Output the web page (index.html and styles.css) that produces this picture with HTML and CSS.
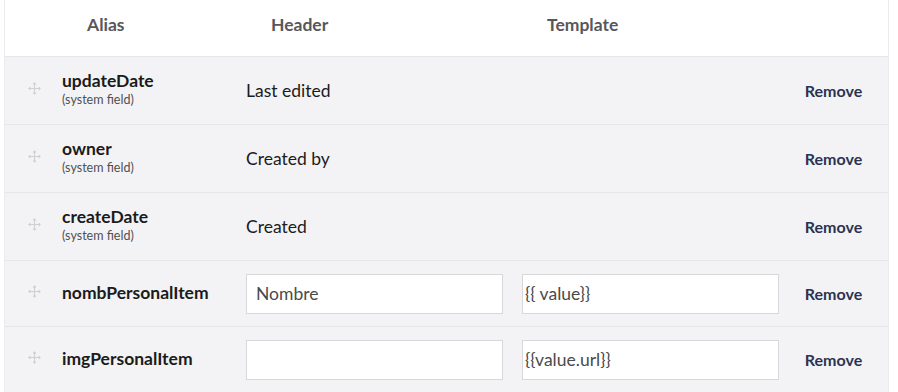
FILE: index.html
```html
<!DOCTYPE html>
<html lang="en">
<head>
  <meta charset="UTF-8" />
  <title>List view columns</title>
  <link rel="stylesheet" href="styles.css">
</head>
<body>

  <!-- Columns table -->
  <div class="columns">
    <div class="row head">
      <div></div>
      <div class="th">Alias</div>
      <div class="th">Header</div>
      <div></div>
      <div class="th">Template</div>
      <div></div>
    </div>

    <div class="row">
      <div class="drag"><svg viewBox="0 0 14 14"><path d="M7 1v12M1 7h12M5.5 2.5L7 1l1.5 1.5M5.5 11.5L7 13l1.5-1.5M2.5 5.5L1 7l1.5 1.5M11.5 5.5L13 7l-1.5 1.5"/></svg></div>
      <div class="alias"><b>updateDate</b><small>(system field)</small></div>
      <div class="val">Last edited</div>
      <div></div>
      <div></div>
      <div class="remove">Remove</div>
    </div>

    <div class="row">
      <div class="drag"><svg viewBox="0 0 14 14"><path d="M7 1v12M1 7h12M5.5 2.5L7 1l1.5 1.5M5.5 11.5L7 13l1.5-1.5M2.5 5.5L1 7l1.5 1.5M11.5 5.5L13 7l-1.5 1.5"/></svg></div>
      <div class="alias"><b>owner</b><small>(system field)</small></div>
      <div class="val">Created by</div>
      <div></div>
      <div></div>
      <div class="remove">Remove</div>
    </div>

    <div class="row">
      <div class="drag"><svg viewBox="0 0 14 14"><path d="M7 1v12M1 7h12M5.5 2.5L7 1l1.5 1.5M5.5 11.5L7 13l1.5-1.5M2.5 5.5L1 7l1.5 1.5M11.5 5.5L13 7l-1.5 1.5"/></svg></div>
      <div class="alias"><b>createDate</b><small>(system field)</small></div>
      <div class="val">Created</div>
      <div></div>
      <div></div>
      <div class="remove">Remove</div>
    </div>

    <div class="row edit">
      <div class="drag"><svg viewBox="0 0 14 14"><path d="M7 1v12M1 7h12M5.5 2.5L7 1l1.5 1.5M5.5 11.5L7 13l1.5-1.5M2.5 5.5L1 7l1.5 1.5M11.5 5.5L13 7l-1.5 1.5"/></svg></div>
      <div class="alias"><b>nombPersonalItem</b></div>
      <div><input type="text" class="field" value="Nombre"></div>
      <div></div>
      <div><input type="text" class="field tpl" value="{{ value}}"></div>
      <div class="remove">Remove</div>
    </div>

    <div class="row edit">
      <div class="drag"><svg viewBox="0 0 14 14"><path d="M7 1v12M1 7h12M5.5 2.5L7 1l1.5 1.5M5.5 11.5L7 13l1.5-1.5M2.5 5.5L1 7l1.5 1.5M11.5 5.5L13 7l-1.5 1.5"/></svg></div>
      <div class="alias"><b>imgPersonalItem</b></div>
      <div><input type="text" class="field" value=""></div>
      <div></div>
      <div><input type="text" class="field tpl" value="{{value.url}}"></div>
      <div class="remove">Remove</div>
    </div>
  </div>

</body>
</html>
```

FILE: styles.css
```css
* { margin: 0; padding: 0; box-sizing: border-box; font-family: 'Lato', 'Open Sans', sans-serif; }

body {
  background: #fff;
  color: #1b1b1b;
}

.columns {
  width: 885px;
  margin-left: 4px;
  border-left: 1px solid #ececee;
  border-right: 1px solid #ececee;
}

.row {
  display: grid;
  grid-template-columns: 57px 184px 257px 19px 257px 1fr;
  align-items: center;
  height: 68px;
  background: #f3f3f5;
  border-bottom: 1px solid #e6e6e8;
}

.row.head {
  height: 57px;
  background: #fff;
  padding-bottom: 7px;
}
.row.edit { height: 66px; }

.th {
  padding-left: 25px;
  font-size: 17.5px;
  font-weight: 700;
  color: #58575b;
}

.drag { display: flex; justify-content: center; padding-left: 1px; margin-top: -4px; }
.drag svg { width: 13px; height: 13px; fill: none; stroke: #d0d0d2; stroke-width: 1.2; }

.alias b { display: block; font-size: 17.5px; font-weight: 700; color: #1b1b1b; line-height: 20px; margin-top: -2px; }
.alias small { display: block; font-size: 12.5px; color: #515054; line-height: 18px; }

.val { font-size: 17.5px; color: #1b1b1b; }

.field {
  width: 100%;
  height: 40px;
  padding: 0 9px;
  border: 1px solid #d8d7d9;
  background: #fff;
  font-size: 17.5px;
  color: #4a4a4a;
  outline: none;
}
.field.tpl { padding: 0 2px; }

.remove {
  text-align: center;
  font-size: 16px;
  font-weight: 700;
  color: #2b3352;
}
```
